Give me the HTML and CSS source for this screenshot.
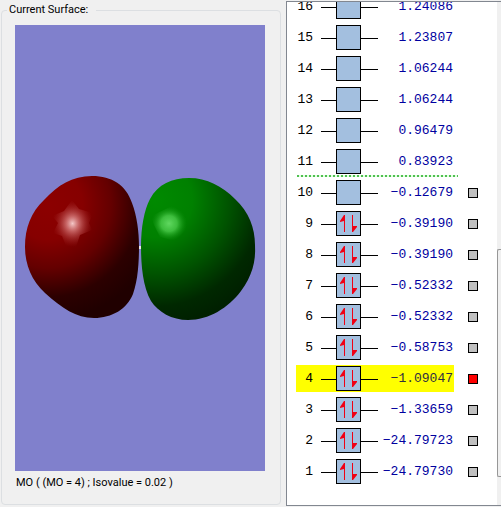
FILE: index.html
```html
<!DOCTYPE html>
<html lang="en">
<head>
<meta charset="utf-8">
<title>Molecular orbitals</title>
<link rel="stylesheet" href="styles.css">
</head>
<body>
<main class="window">
  <fieldset class="surface">
    <legend>Current Surface:</legend>
    <svg class="view" viewBox="15 25 250 446" preserveAspectRatio="xMidYMid slice" role="img" aria-label="Orbital surface">
      <defs>
        <radialGradient id="red" gradientUnits="userSpaceOnUse" cx="48" cy="205" r="115">
          <stop offset="0" stop-color="#8c0000"/><stop offset=".3" stop-color="#860000"/>
          <stop offset=".55" stop-color="#640000"/><stop offset=".8" stop-color="#2c0000"/><stop offset="1" stop-color="#200000"/>
        </radialGradient>
        <radialGradient id="green" gradientUnits="userSpaceOnUse" cx="155" cy="200" r="125">
          <stop offset="0" stop-color="#008a00"/><stop offset=".3" stop-color="#008000"/>
          <stop offset=".6" stop-color="#005200"/><stop offset=".85" stop-color="#002800"/><stop offset="1" stop-color="#002000"/>
        </radialGradient>
        <radialGradient id="redShine">
          <stop offset="0" stop-color="#f4c8c8"/><stop offset=".3" stop-color="#d88080" stop-opacity=".8"/><stop offset="1" stop-color="#a02020" stop-opacity="0"/>
        </radialGradient>
        <radialGradient id="greenShine">
          <stop offset="0" stop-color="#60d860"/><stop offset=".45" stop-color="#4ccc4c" stop-opacity=".8"/><stop offset="1" stop-color="#109010" stop-opacity="0"/>
        </radialGradient>
      </defs>
      <path fill="#e8e8e8" d="M137 246h6v3h-6z"/>
      <path fill="url(#red)" d="M92 176C112 176 126 185 132 203C137 216 139 232 139 246C139 262 138 280 133 294C127 309 112 318 94 318C76 318 62 308 45 293C32 281 25 265 25 247C25 228 31 212 44 200C58 185 72 176 92 176Z"/>
      <path fill="url(#green)" d="M189 178C207 178 222 186 235 199C249 212 255 228 255 245C256 262 252 276 241 291C228 308 209 320 188 320C172 320 158 312 151 301C143 287 141 266 141 246C141 228 144 210 150 199C158 184 172 178 189 178Z"/>
      <path fill="url(#redShine)" d="M72 200L79 209L93 213L89 223L92 230L80 235L76 247L66 246L62 236L53 233L58 223L52 216L64 211Z"/>
      <path fill="url(#greenShine)" d="M172 206L186 213L187 229L175 241L160 237L154 225L151 216Z"/>
    </svg>
    <p class="caption">MO ( (MO = 4) ; Isovalue = 0.02 )</p>
  </fieldset>

  <section class="levels" aria-label="Orbital energies">
    <ol class="list" id="list"></ol>
    <div class="scroll" aria-hidden="true"><span class="thumb"></span></div>
  </section>
</main>
<script src="levels.js"></script>
</body>
</html>
```
FILE: styles.css
```css
* { box-sizing: border-box; }

body {
  margin: 0;
  background: #f0f0f0;
  color: #000;
  font-family: Roboto, "Liberation Sans", Arial, sans-serif;
  font-size: 11px;
}

.window {
  display: grid;
  grid-template-columns: 281px minmax(0, 1fr);
  column-gap: 5px;
  height: 100vh;
}

.surface {
  display: flex;
  flex-direction: column;
  min-width: 0;
  margin: 3px 0 2px 1px;
  padding: 8px 15px 13px 13px;
  border: 1px solid #dcdfe2;
  border-radius: 4px;
}

.surface legend {
  margin-left: -8px;
  padding: 0 8px 0 2px;
  line-height: 14px;
}

.view {
  flex: 1;
  min-height: 0;
  width: 100%;
  background: #8080cc;
}

.caption {
  margin: 4px 0 0 1px;
  line-height: 16px;
}

.levels {
  display: grid;
  grid-template-columns: minmax(0, 1fr) 4px;
  min-height: 0;
  margin: 1px 0;
  border: 1px solid #828790;
  border-right: 0;
  background: #fff;
  overflow: hidden;
}

.list {
  display: flex;
  flex-direction: column;
  justify-content: flex-end;
  min-height: 0;
  margin: 0;
  padding: 0 0 18px 9px;
  list-style: none;
  overflow: hidden;
}

.level {
  position: relative;
  display: flex;
  flex: none;
  align-items: center;
  gap: 14px;
  height: 31px;
}

.entry {
  display: grid;
  grid-template-columns: 17px 8px 57px minmax(0, 1fr);
  align-items: center;
  width: 158px;
  height: 27px;
  font-family: "Liberation Mono", monospace;
  font-size: 13px;
  line-height: 16px;
}

.number { text-align: right; }

.energy {
  grid-column: 4;
  justify-self: end;
  margin-right: 1px;
  color: #0000a0;
}

.selected .entry { background: #ff0; }
.selected .energy { color: #303040; }

.orbital { display: block; grid-column: 3; width: 57px; height: 25px; }

.frontier::after {
  content: "";
  position: absolute;
  left: 1px;
  bottom: 0;
  width: 161px;
  height: 2px;
  background: repeating-linear-gradient(90deg, #50c050 0 2px, #e4ffe4 2px 4px);
}

.pick {
  appearance: none;
  width: 10px;
  height: 10px;
  margin: 0;
  border: 1px solid #000;
  background: #c0c0c0;
}

.pick:checked { background: #f00; }

.scroll {
  display: grid;
  grid-template-rows: 247fr 228fr 28fr;
  background: #f0f0f0;
}

.thumb {
  grid-row: 2;
  border: 1px solid #979797;
  border-right: 0;
  border-radius: 2px 0 0 2px;
}
```
FILE: levels.js
```js
const energies = [
  [16, "1.24086"], [15, "1.23807"], [14, "1.06244"], [13, "1.06244"],
  [12, "0.96479"], [11, "0.83923"], [10, "−0.12679"], [9, "−0.39190"],
  [8, "−0.39190"], [7, "−0.52332"], [6, "−0.52332"], [5, "−0.58753"],
  [4, "−1.09047"], [3, "−1.33659"], [2, "−24.79723"], [1, "−24.79730"]
];
const selected = 4;

// Opposed half-barbed arrows: an electron pair in a filled orbital.
const pair = '<path d="M23 21V10l-4 1v-1l4-6h1v17zM31 4h1v11h4v1l-4 5h-1z" fill="#f00014"/>';

document.getElementById("list").innerHTML = energies.map(([n, e]) => `
  <li class="level${n === selected ? " selected" : ""}${n === 11 ? " frontier" : ""}">
    <label class="entry" for="mo${n}">
      <span class="number">${n}</span>
      <svg class="orbital" viewBox="0 0 57 25" aria-hidden="true">
        <path d="M0 13.5h57" stroke="#000"/>
        <rect x="15.5" y=".5" width="24" height="24" fill="#a3bfdf" stroke="#000"/>
        ${n < 10 ? pair : ""}
      </svg>
      <span class="energy">${e}</span>
    </label>
    ${n <= 10 ? `<input class="pick" type="radio" name="mo" id="mo${n}"${n === selected ? " checked" : ""}>` : ""}
  </li>`).join("");
```
